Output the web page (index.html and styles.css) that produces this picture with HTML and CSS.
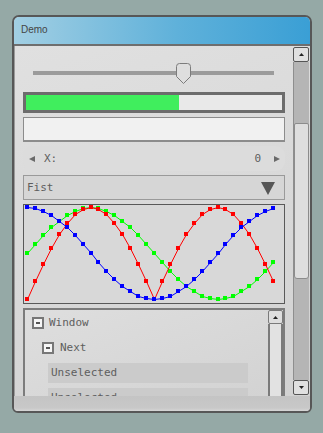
FILE: index.html
```html
<!DOCTYPE html>
<html>
<head>
<meta charset="utf-8">
<link rel="stylesheet" href="styles.css">
</head>
<body>
<div class="window">
  <div class="titlebar"><span class="title">Demo</span></div>
  <div class="body">
    <div class="viewport">
      <div class="content">
        <div class="slider">
          <div class="track"></div>
          <svg class="handle" width="17" height="21" viewBox="0 0 17 21"><path d="M1.5 3.5 Q1.5 0.5 4.5 0.5 H12.5 Q15.5 0.5 15.5 3.5 V13.5 L8.5 20.5 L1.5 13.5 Z" fill="#dedede" stroke="#7c7c7c" stroke-width="1"/></svg>
        </div>
        <div class="progress"><div class="fill" style="width:153px"></div></div>
        <div class="textfield"></div>
        <div class="spinner">
          <svg class="arr" width="6" height="6" viewBox="0 0 6 6"><path d="M0 3 L6 0 V6 Z" fill="#6a6a6a"/></svg>
          <span class="label">X:</span>
          <span class="value">0</span>
          <svg class="arr" width="6" height="6" viewBox="0 0 6 6"><path d="M6 3 L0 0 V6 Z" fill="#6a6a6a"/></svg>
        </div>
        <div class="dropdown">
          <span class="label">Fist</span>
          <svg width="14" height="13" viewBox="0 0 14 13"><path d="M0 0 H14 L7 13 Z" fill="#565656"/></svg>
        </div>
        <div class="chart">
          <svg width="260" height="98" viewBox="1 1 260 98">
            <defs>
              <marker id="mr" markerUnits="userSpaceOnUse" markerWidth="5" markerHeight="5" refX="2.5" refY="2.5"><rect x="0" y="0" width="4" height="4" fill="#ff0000"/></marker>
              <marker id="mg" markerUnits="userSpaceOnUse" markerWidth="5" markerHeight="5" refX="2.5" refY="2.5"><rect x="0" y="0" width="4" height="4" fill="#00ff00"/></marker>
              <marker id="mb" markerUnits="userSpaceOnUse" markerWidth="5" markerHeight="5" refX="2.5" refY="2.5"><rect x="0" y="0" width="4" height="4" fill="#0000ff"/></marker>
            </defs>
            <g transform="translate(0.5 0.5)" fill="none" stroke-width="1">
              <polyline stroke="#00ff00" marker-start="url(#mg)" marker-mid="url(#mg)" marker-end="url(#mg)" points="4,49 12,40 20,31 28,23 36,17 44,11 52,7 60,4 68,3 75,4 83,7 91,11 99,17 107,23 115,31 123,40 131,49 139,58 147,67 155,75 163,82 171,87 179,92 187,94 195,95 202,94 210,92 218,87 226,82 234,75 242,67 250,58"/>
              <polyline stroke="#ff0000" marker-start="url(#mr)" marker-mid="url(#mr)" marker-end="url(#mr)" points="4,95 12,77 20,60 28,44 36,30 44,19 52,10 60,5 68,3 75,5 83,10 91,19 99,30 107,44 115,60 123,77 131,95 139,77 147,60 155,44 163,30 171,19 179,10 187,5 195,3 202,5 210,10 218,19 226,30 234,44 242,60 250,77"/>
              <polyline stroke="#0000ff" marker-start="url(#mb)" marker-mid="url(#mb)" marker-end="url(#mb)" points="4,3 12,4 20,7 28,11 36,17 44,23 52,31 60,40 68,49 75,58 83,67 91,75 99,82 107,87 115,92 123,94 131,95 139,94 147,92 155,87 163,82 171,75 179,67 187,58 195,49 202,40 210,31 218,23 226,17 234,11 242,7 250,4"/>
            </g>
          </svg>
        </div>
        <div class="tree">
          <div class="tree-items">
            <div class="row l1"><span class="toggle"><i></i></span><span>Window</span></div>
            <div class="row l2"><span class="toggle"><i></i></span><span>Next</span></div>
            <div class="row leaf">Unselected</div>
            <div class="row leaf">Unselected</div>
          </div>
          <div class="mini-scroll">
            <div class="mini-btn"><svg width="5" height="3" viewBox="0 0 5 3"><path d="M2.5 0 L5 3 H0 Z" fill="#222"/></svg></div>
            <div class="mini-track"></div>
          </div>
        </div>
      </div>
    </div>
    <div class="scrollbar">
      <div class="sb-btn"><svg width="5" height="3" viewBox="0 0 5 3"><path d="M2.5 0 L5 3 H0 Z" fill="#222"/></svg></div>
      <div class="sb-track"><div class="sb-thumb"></div></div>
      <div class="sb-btn"><svg width="5" height="3" viewBox="0 0 5 3"><path d="M0 0 H5 L2.5 3 Z" fill="#222"/></svg></div>
    </div>
  </div>
  <div class="footer"></div>
</div>
</body>
</html>
```
FILE: styles.css
```css
html, body {
  margin: 0;
  padding: 0;
}
body {
  background: #95a9a6;
  font-family: "DejaVu Sans Mono", monospace;
  font-size: 11px;
  color: #5e5e5e;
  padding-top: 15px;
  padding-left: 12px;
}
.window {
  width: 300px;
  height: 398px;
  box-sizing: border-box;
  border: 2px solid #575757;
  border-radius: 7px 7px 6px 6px;
  overflow: hidden;
  display: flex;
  flex-direction: column;
  background: #d6d6d6;
}
.titlebar {
  flex: none;
  height: 29px;
  box-sizing: border-box;
  padding: 0 0 2px 7px;
  border-bottom: 2px solid #6e6e6e;
  background: linear-gradient(to right, #a2cfe3, #5fb1da 55%, #3a9fd5);
  display: flex;
  align-items: center;
  font-family: "Liberation Sans", Arial, sans-serif;
  font-size: 10px;
  color: #454545;
}
.body {
  flex: none;
  height: 350px;
  display: flex;
  background: linear-gradient(160deg, #e0e0e0, #d2d2d2);
  border-left: 1px solid #9a9a9a;
}
.viewport {
  width: 278px;
  box-sizing: border-box;
  padding: 0 8px 0 8px;
  overflow: hidden;
}
.content {
  display: flex;
  flex-direction: column;
  gap: 4px;
}
.slider {
  position: relative;
  height: 42px;
}
.track {
  margin: 25px 11px 0 10px;
  height: 4px;
  background: #9b9b9b;
}
.handle {
  position: absolute;
  left: 152px;
  top: 17px;
}
.progress {
  height: 21px;
  box-sizing: border-box;
  border: 3px solid #6c6c6c;
  background: #e9e9e9;
}
.fill {
  height: 100%;
  background: #40ee5d;
}
.textfield {
  height: 25px;
  box-sizing: border-box;
  border: 1px solid #8c8c8c;
  border-bottom: 2px solid #8c8c8c;
  background: #f1f1f1;
}
.spinner {
  height: 25px;
  border-radius: 9px;
  background: #dcdcdc;
  display: flex;
  align-items: center;
  padding: 0 5px 0 6px;
}
.spinner .label {
  margin-left: 9px;
  flex: 1;
}
.spinner .value {
  margin-right: 13px;
}
.dropdown {
  height: 25px;
  box-sizing: border-box;
  border: 1px solid #9a9a9a;
  background: #d6d6d6;
  display: flex;
  align-items: center;
  justify-content: space-between;
  padding: 0 9px 0 3px;
}
.dropdown svg {
  margin-top: 1px;
}
.chart {
  height: 100px;
  box-sizing: border-box;
  border: 1px solid #595959;
  background: #d8d8d8;
}
.chart svg {
  display: block;
}
.tree {
  height: 100px;
  box-sizing: border-box;
  border: 2px solid #7c7c7c;
  background: linear-gradient(160deg, #dedede, #d2d2d2);
  display: flex;
}
.tree-items {
  flex: 1;
  padding-top: 3px;
  display: flex;
  flex-direction: column;
  gap: 5px;
}
.row {
  height: 20px;
  display: flex;
  align-items: center;
  line-height: 20px;
  flex: none;
}
.row.l1 {
  padding-left: 7px;
  gap: 5px;
}
.row.l2 {
  padding-left: 17px;
  gap: 6px;
}
.row.leaf {
  margin-left: 23px;
  width: 200px;
  box-sizing: border-box;
  padding-left: 3px;
  background: #cbcbcb;
}
.toggle {
  width: 12px;
  height: 12px;
  box-sizing: border-box;
  border: 2px solid #777;
  background: #f6f6f6;
  display: flex;
  align-items: center;
  justify-content: center;
}
.toggle i {
  display: block;
  width: 4px;
  height: 2px;
  background: #555;
}
.mini-scroll {
  width: 15px;
  display: flex;
  flex-direction: column;
}
.mini-btn {
  height: 14px;
  box-sizing: border-box;
  border: 1px solid #7a7a7a;
  border-radius: 2px;
  background: #dedede;
  display: flex;
  align-items: center;
  justify-content: center;
}
.mini-track {
  flex: 1;
  border-left: 2px solid #7a7a7a;
  border-right: 2px solid #7a7a7a;
  background: #e2e2e2;
}
.scrollbar {
  width: 16px;
  margin-right: 1px;
  padding-top: 1px;
  display: flex;
  flex-direction: column;
}
.sb-btn {
  height: 15px;
  box-sizing: border-box;
  border: 1px solid #555;
  border-radius: 2px;
  background: #e0e0e0;
  display: flex;
  align-items: center;
  justify-content: center;
}
.sb-track {
  height: 318px;
  box-sizing: border-box;
  background: #b5b5b5;
  border-left: 1px solid #8e8e8e;
}
.sb-thumb {
  margin-top: 61px;
  height: 156px;
  box-sizing: border-box;
  border: 1px solid #8c8c8c;
  border-radius: 2px 2px 3px 3px;
  background: #dedede;
}
.footer {
  flex: 1;
  background: linear-gradient(#c4c4c4, #c8c8c8 80%, #d6d6d6);
}
```
